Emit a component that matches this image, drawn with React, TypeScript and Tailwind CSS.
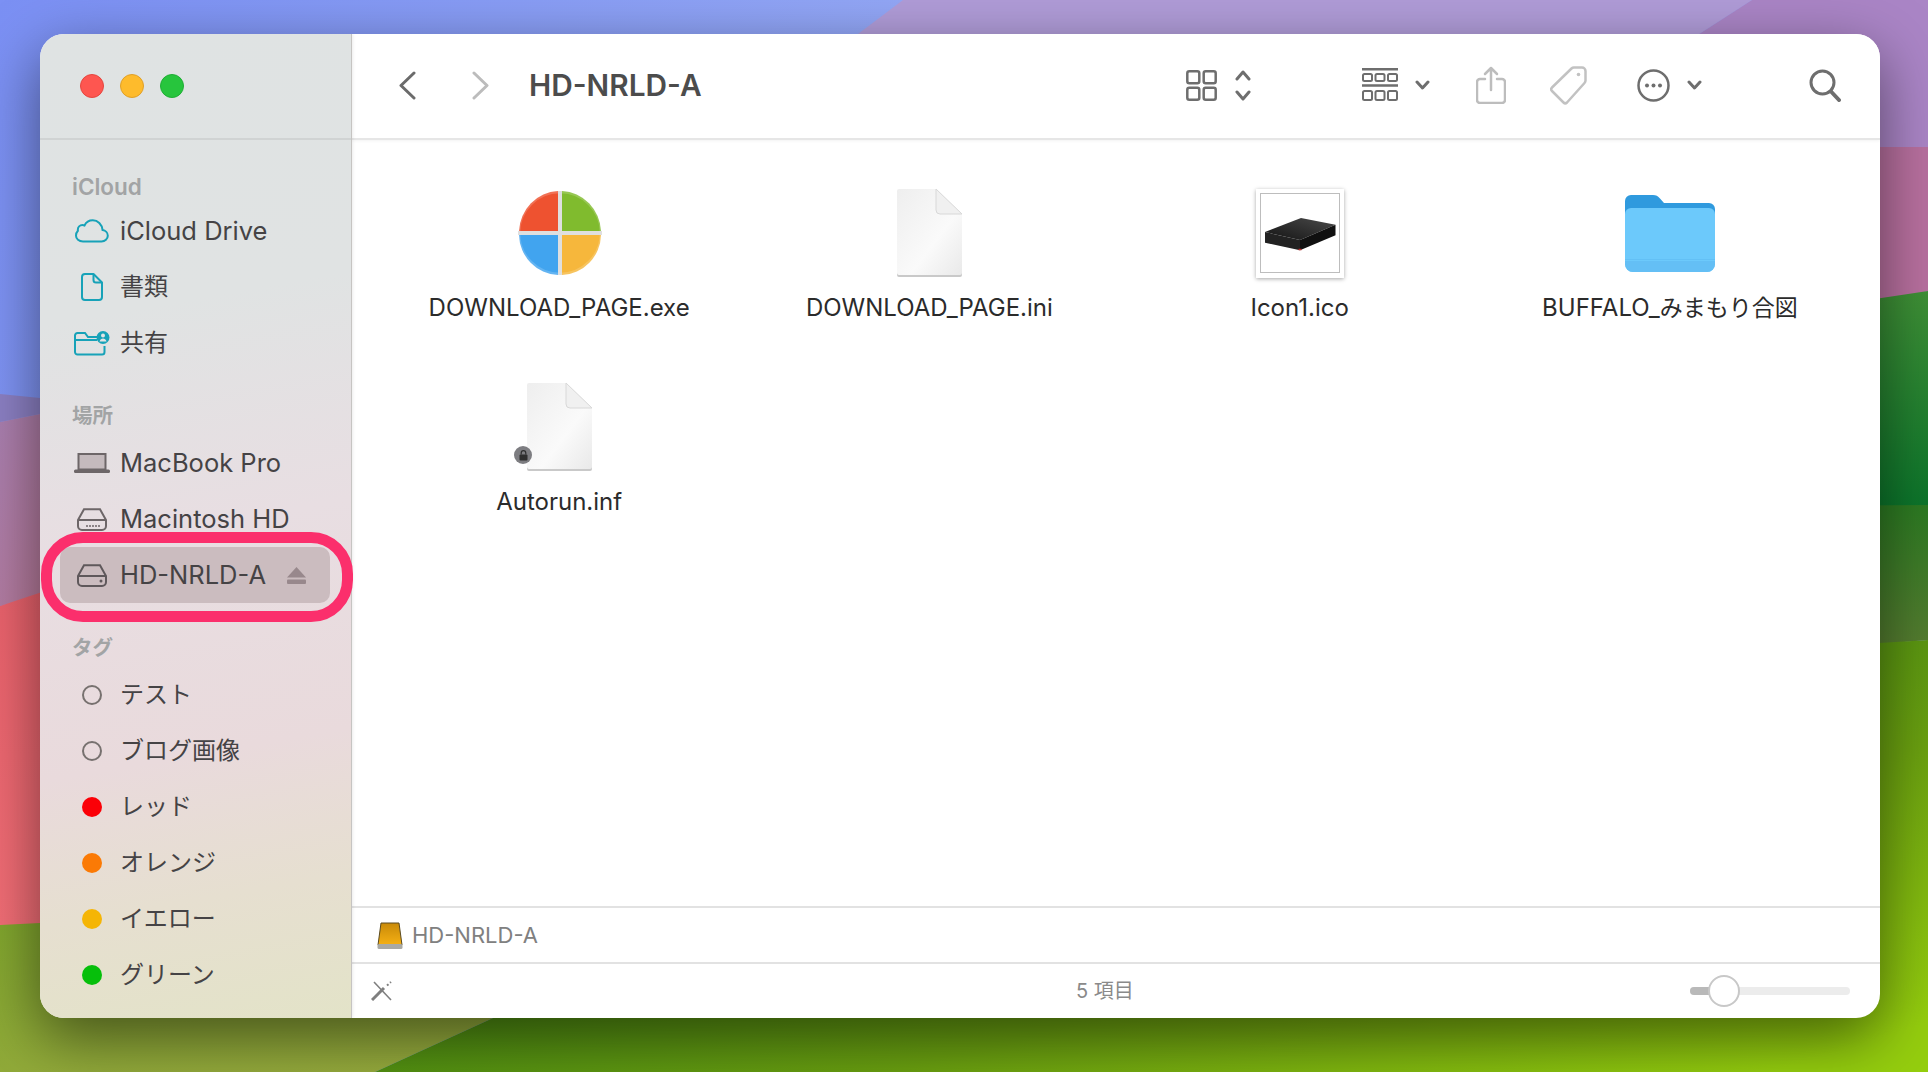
import type { ReactNode } from "react";

const CJK = "font-['Inter','Noto_Sans_CJK_JP',sans-serif]";

function Wallpaper() {
  return (
    <svg className="absolute inset-0 h-full w-full" viewBox="0 0 1928 1072" preserveAspectRatio="none">
      <defs>
        <linearGradient id="blue" x1="0" y1="0" x2="1" y2="0.2">
          <stop offset="0" stopColor="#7b90f4" />
          <stop offset="0.5" stopColor="#95a9f6" />
        </linearGradient>
        <linearGradient id="mauve" x1="0" y1="0" x2="1" y2="1">
          <stop offset="0" stopColor="#a97fb0" />
          <stop offset="1" stopColor="#bb7a96" />
        </linearGradient>
        <linearGradient id="coral" x1="0" y1="0" x2="0" y2="1">
          <stop offset="0" stopColor="#ea626c" />
          <stop offset="1" stopColor="#f26e76" />
        </linearGradient>
        <linearGradient id="greenTop" x1="0" y1="0" x2="0" y2="1">
          <stop offset="0" stopColor="#3f9036" />
          <stop offset="1" stopColor="#0c752b" />
        </linearGradient>
        <linearGradient id="greenMid" x1="0" y1="0" x2="0" y2="1">
          <stop offset="0" stopColor="#2c7a22" />
          <stop offset="1" stopColor="#5f7d33" />
        </linearGradient>
        <linearGradient id="lime" x1="0.1" y1="0.3" x2="0.9" y2="1">
          <stop offset="0" stopColor="#2f7a14" />
          <stop offset="0.6" stopColor="#6aa010" />
          <stop offset="1" stopColor="#95ce0e" />
        </linearGradient>
        <linearGradient id="olive" x1="0" y1="0" x2="0.6" y2="1">
          <stop offset="0" stopColor="#7ea52c" />
          <stop offset="1" stopColor="#98ac3e" />
        </linearGradient>
      </defs>
      <rect width="1928" height="1072" fill="url(#blue)" />
      <polygon points="903,0 1752,0 1519,150 1400,400 373,400" fill="#b09cd8" />
      <polygon points="1752,0 1928,0 1928,150 1519,150" fill="#aa85c6" />
      <polygon points="1680,147 1928,147 1928,291 1880,305 1680,340" fill="#b8709f" />
      <polygon points="1600,340 1928,291 1928,507 1600,507" fill="url(#greenTop)" />
      <polygon points="1600,507 1928,505 1928,640 1880,644 1600,680" fill="url(#greenMid)" />
      <polygon points="0,394 60,400 60,410 0,422" fill="#8c80c4" />
      <polygon points="0,422 60,410 60,590 0,606" fill="url(#mauve)" />
      <polygon points="0,606 60,586 60,925 0,925" fill="url(#coral)" />
      <polygon points="0,925 60,922 751,900 375,1072 0,1072" fill="url(#olive)" />
      <polygon points="751,900 1600,660 1928,640 1928,1072 375,1072" fill="url(#lime)" />
    </svg>
  );
}

function Cloud() {
  return (
    <svg width="34" height="24" viewBox="0 0 34 24" fill="none" stroke="#17a2b8" strokeWidth="2">
      <path d="M8 22.500h18.500c3.500 0 6.300-2.500 6.300-5.700 0-3.100-2.400-5.400-5.200-5.700C27 5.400 22.700 1.300 17.800 1.300c-3.700 0-6.800 2-8.300 5.200-.6-.3-1.300-.4-2-.4-2.700 0-4.700 2.100-4.700 4.800 0 .3 0 .6.100.9C1.900 12.800 1 14.900 1 16.800c0 3.200 2.900 5.700 7 5.700Z" />
    </svg>
  );
}

function DocOutline() {
  return (
    <svg width="22" height="28" viewBox="0 0 22 28" fill="none" stroke="#17a2b8" strokeWidth="2" strokeLinejoin="round">
      <path d="M4 1h8.500L21 9.500V24a3 3 0 0 1-3 3H4a3 3 0 0 1-3-3V4a3 3 0 0 1 3-3Z" />
      <path d="M12.500 1v6a2.500 2.500 0 0 0 2.500 2.500h6" />
    </svg>
  );
}

function SharedFolder() {
  return (
    <svg width="36" height="26" viewBox="0 0 36 26" fill="none" stroke="#17a2b8" strokeWidth="2">
      <path d="M24 7H14l-3-4H3.500A2.500 2.500 0 0 0 1 5.500V22a2.500 2.500 0 0 0 2.500 2.500H28a2.500 2.500 0 0 0 2.500-2.500v-6" />
      <path d="M1 10h22" />
      <circle cx="29" cy="7.500" r="6.500" fill="#17a2b8" stroke="none" />
      <circle cx="29" cy="5.500" r="2" fill="#e3e5e5" stroke="none" />
      <path d="M25.500 11.500c.5-2 2-3 3.500-3s3 1 3.500 3Z" fill="#e3e5e5" stroke="none" />
    </svg>
  );
}

function Laptop() {
  return (
    <svg width="36" height="20" viewBox="0 0 36 20" fill="none">
      <path d="M4.500 1h27v15.500h-27Z" fill="#c4babd" stroke="#6d6668" strokeWidth="2" />
      <rect x="0" y="16.500" width="36" height="3.500" rx="1.500" fill="#6d6668" />
    </svg>
  );
}

function InternalDisk() {
  return (
    <svg width="30" height="23" viewBox="0 0 30 23" fill="none" stroke="#6d6668" strokeWidth="2">
      <path d="M7 1.200h16L29 12v6a4 4 0 0 1-4 4H5a4 4 0 0 1-4-4v-6Z" />
      <path d="M1.500 12h27" />
      <path d="M10 17v2M13 17v2M16 17v2M19 17v2M22 17v2" strokeWidth="1.500" />
    </svg>
  );
}

function ExternalDisk() {
  return (
    <svg width="30" height="23" viewBox="0 0 30 23" fill="none" stroke="#5f585b" strokeWidth="2">
      <path d="M7 1.200h16L29 12v6a4 4 0 0 1-4 4H5a4 4 0 0 1-4-4v-6Z" />
      <path d="M1.500 12h27" />
      <circle cx="24" cy="17" r="1.500" fill="#5f585b" stroke="none" />
    </svg>
  );
}

function Eject() {
  return (
    <svg width="19" height="17" viewBox="0 0 19 17" fill="#98888c">
      <path d="M9.500 0 19 10.500H0Z" />
      <rect x="0" y="12.500" width="19" height="4.500" rx="1" />
    </svg>
  );
}

function Heading({ children, className }: { children: ReactNode; className: string }) {
  return (
    <div className={`flex h-[32px] items-center pl-[12px] font-semibold text-[#a2a4a5] ${CJK} ${className}`}>
      {children}
    </div>
  );
}

function SidebarRow({
  icon,
  label,
  selected,
  trailing,
}: {
  icon: ReactNode;
  label: string;
  selected?: boolean;
  trailing?: ReactNode;
}) {
  const isJapanese = /[^\x00-\x7F]/.test(label);
  return (
    <div
      className={`flex h-[56px] w-[270px] items-center rounded-[10px] pl-[12px] ${selected ? "bg-[#cbbcbf]" : ""}`}
    >
      <span className="flex w-[40px] shrink-0 items-center justify-center">{icon}</span>
      <span className={`ml-[8px] flex-1 text-[#454345] ${isJapanese ? "text-[24px]" : "text-[25.500px]"} ${CJK}`}>
        {label}
      </span>
      {trailing && <span className="mr-[24px] flex">{trailing}</span>}
    </div>
  );
}

function TagDot({ color }: { color?: string }) {
  if (!color) return <span className="h-[20px] w-[20px] rounded-full border-2 border-[#77716f]" />;
  return <span className="h-[20px] w-[20px] rounded-full" style={{ backgroundColor: color }} />;
}

const tags = [
  { label: "テスト" },
  { label: "ブログ画像" },
  { label: "レッド", color: "#fb0007" },
  { label: "オレンジ", color: "#fb7a05" },
  { label: "イエロー", color: "#f5b505" },
  { label: "グリーン", color: "#06bf0b" },
];

function Sidebar() {
  return (
    <aside className="relative flex w-[312px] shrink-0 flex-col border-r border-[#c6c4c2] bg-[linear-gradient(170deg,#dfe3e3_0%,#e0e3e3_28%,#e8dee2_50%,#e9dadc_72%,#e6dfd0_86%,#e3e3c8_100%)] shadow-[1px_0_3px_rgba(0,0,0,0.08)]">
      <div className="flex h-[106px] shrink-0 items-center gap-[16px] border-b-2 border-[#d0d3d3] pl-[40px]">
        <span className="h-[24px] w-[24px] rounded-full border border-[#e5463f] bg-[#fe5650]" />
        <span className="h-[24px] w-[24px] rounded-full border border-[#e0a028] bg-[#febb2c]" />
        <span className="h-[24px] w-[24px] rounded-full border border-[#1fae35] bg-[#27c53d]" />
      </div>
      <div className="pl-[20px] pt-[31px]">
        <Heading className="text-[22.500px]">iCloud</Heading>
        <SidebarRow icon={<Cloud />} label="iCloud Drive" />
        <SidebarRow icon={<DocOutline />} label="書類" />
        <SidebarRow icon={<SharedFolder />} label="共有" />
        <div className="h-[29px]" />
        <Heading className="mb-[3px] text-[20.500px]">場所</Heading>
        <SidebarRow icon={<Laptop />} label="MacBook Pro" />
        <SidebarRow icon={<InternalDisk />} label="Macintosh HD" />
        <SidebarRow icon={<ExternalDisk />} label="HD-NRLD-A" selected trailing={<Eject />} />
        <div className="h-[29px]" />
        <Heading className="mb-[3px] text-[20.500px]">タグ</Heading>
        {tags.map((t) => (
          <SidebarRow key={t.label} icon={<TagDot color={t.color} />} label={t.label} />
        ))}
      </div>
      {/* annotation ring drawn over the selected row */}
      <div className="pointer-events-none absolute left-[1px] top-[498px] h-[90px] w-[312px] rounded-[42px] border-[11px] border-[#fb2f6c]" />
    </aside>
  );
}

function Chevron({ dir, color }: { dir: "left" | "right"; color: string }) {
  return (
    <svg width="17" height="29" viewBox="0 0 17 29" fill="none" stroke={color} strokeWidth="3" strokeLinecap="round" strokeLinejoin="round">
      <path d={dir === "left" ? "M15 2 2 14.500 15 27" : "M2 2 15 14.500 2 27"} />
    </svg>
  );
}

function SmallChevron() {
  return (
    <svg width="15" height="10" viewBox="0 0 15 10" fill="none" stroke="#6e6e6e" strokeWidth="3" strokeLinecap="round" strokeLinejoin="round">
      <path d="M2 2l5.500 6L13 2" />
    </svg>
  );
}

function Toolbar() {
  return (
    <div className="flex h-[106px] shrink-0 items-center border-b-2 border-[#e6e6e6] bg-white pb-[2px] pr-[39px] pl-[47px] shadow-[0_1px_3px_rgba(0,0,0,0.05)]">
      <Chevron dir="left" color="#6b6b6b" />
      <span className="ml-[56px]">
        <Chevron dir="right" color="#bcbcbc" />
      </span>
      <span className={`ml-[40px] text-[29.800px] font-semibold text-[#4c4c4c] ${CJK}`}>HD-NRLD-A</span>
      <span className="ml-auto flex">
        <svg width="31" height="31" viewBox="0 0 31 31" fill="none" stroke="#6e6e6e" strokeWidth="2.500">
          <rect x="1.300" y="1.300" width="12" height="12" rx="2" />
          <rect x="17.700" y="1.300" width="12" height="12" rx="2" />
          <rect x="1.300" y="17.700" width="12" height="12" rx="2" />
          <rect x="17.700" y="17.700" width="12" height="12" rx="2" />
        </svg>
      </span>
      <span className="ml-[18px] flex">
        <svg width="16" height="31" viewBox="0 0 16 31" fill="none" stroke="#6e6e6e" strokeWidth="3" strokeLinecap="round" strokeLinejoin="round">
          <path d="M2 9l6-7 6 7M2 22l6 7 6-7" />
        </svg>
      </span>
      <span className="ml-[111px] flex">
        <svg width="36" height="34" viewBox="0 0 36 34" fill="none" stroke="#6e6e6e" strokeWidth="2">
          <path d="M0 1.200h36M0 17.500h36" strokeWidth="2.500" />
          <rect x="1" y="6" width="9" height="7" rx="1.500" />
          <rect x="13.500" y="6" width="9" height="7" rx="1.500" />
          <rect x="26" y="6" width="9" height="7" rx="1.500" />
          <rect x="1" y="23" width="9" height="9" rx="1.500" />
          <rect x="13.500" y="23" width="9" height="9" rx="1.500" />
          <rect x="26" y="23" width="9" height="9" rx="1.500" />
        </svg>
      </span>
      <span className="ml-[17px] flex">
        <SmallChevron />
      </span>
      <span className="ml-[46px] flex">
        <svg width="30" height="38" viewBox="0 0 30 38" fill="none" stroke="#bdbdbd" strokeWidth="2.500" strokeLinecap="round" strokeLinejoin="round">
          <path d="M9 13H4a3 3 0 0 0-3 3v18a3 3 0 0 0 3 3h22a3 3 0 0 0 3-3V16a3 3 0 0 0-3-3h-5" />
          <path d="M15 24V2M9 8l6-6 6 6" />
        </svg>
      </span>
      <span className="ml-[44px] flex">
        <svg width="37" height="39" viewBox="0 0 37 39" fill="none" stroke="#c2c2c2" strokeWidth="2.500" strokeLinejoin="round">
          <path d="M24 1.500h8a3.500 3.500 0 0 1 3.500 3.500v9.500a3.500 3.500 0 0 1-1 2.500L17 36.500a2.500 2.500 0 0 1-3.500 0L2 25a2.500 2.500 0 0 1 0-3.500L21.500 2.500a3.500 3.500 0 0 1 2.500-1Z" />
          <circle cx="28.500" cy="8.500" r="1.800" fill="#c2c2c2" stroke="none" />
        </svg>
      </span>
      <span className="ml-[50px] flex">
        <svg width="33" height="33" viewBox="0 0 33 33" fill="none" stroke="#6e6e6e" strokeWidth="2.500">
          <circle cx="16.500" cy="16.500" r="15" />
          <circle cx="10" cy="16.500" r="2" fill="#6e6e6e" stroke="none" />
          <circle cx="16.500" cy="16.500" r="2" fill="#6e6e6e" stroke="none" />
          <circle cx="23" cy="16.500" r="2" fill="#6e6e6e" stroke="none" />
        </svg>
      </span>
      <span className="ml-[17px] flex">
        <SmallChevron />
      </span>
      <span className="ml-[107px] flex">
        <svg width="32" height="33" viewBox="0 0 32 33" fill="none" stroke="#6e6e6e" strokeWidth="3" strokeLinecap="round">
          <circle cx="13.500" cy="13.500" r="11.500" />
          <path d="M22 22.500 30 31" strokeWidth="4" />
        </svg>
      </span>
    </div>
  );
}

function GenericDoc() {
  return (
    <svg width="68" height="90" viewBox="0 0 68 90" fill="none">
      <defs>
        <linearGradient id="sheet" x1="0" y1="0" x2="1" y2="1">
          <stop offset="0" stopColor="#eeeeee" />
          <stop offset="0.6" stopColor="#fafafa" />
          <stop offset="1" stopColor="#e9e9e9" />
        </linearGradient>
      </defs>
      <path d="M4 2.500h37L67 28v58a2 2 0 0 1-2 2H4a2 2 0 0 1-2-2V4.500a2 2 0 0 1 2-2Z" fill="#c9c9c9" transform="translate(0 1)" />
      <path d="M4 1h37l26 26v58a2 2 0 0 1-2 2H4a2 2 0 0 1-2-2V3a2 2 0 0 1 2-2Z" fill="url(#sheet)" />
      <path d="M41 1v21a4 4 0 0 0 4 4h22Z" fill="#f0f0f0" stroke="#d8d8d8" />
    </svg>
  );
}

function WindowsExe() {
  return (
    <svg width="86" height="86" viewBox="0 0 84 86" className="ml-[1px]">
      <path d="M40 1a41 42 0 0 0-39 40h39Z" fill="#ee5230" />
      <path d="M44 1a41 42 0 0 1 39 40H44Z" fill="#80bb2e" />
      <path d="M40 45H1a41 41 0 0 0 39 40Z" fill="#41a4ef" />
      <path d="M44 45h39a41 41 0 0 1-39 40Z" fill="#f6b73c" />
      <circle cx="42" cy="43" r="41" fill="none" stroke="#ffffff" strokeOpacity="0.18" strokeWidth="2.500" />
      <path d="M42 1v84M0 43h84" stroke="#dfdfdf" strokeWidth="4" />
    </svg>
  );
}

function DriveThumb() {
  return (
    <span className="flex bg-white shadow-[0_1px_4px_rgba(0,0,0,0.35)]">
      <svg width="88" height="89" viewBox="0 0 88 89" fill="none">
        <defs>
          <linearGradient id="driveTop" x1="0" y1="1" x2="1" y2="0">
            <stop offset="0" stopColor="#141414" />
            <stop offset="1" stopColor="#4a4a4a" />
          </linearGradient>
        </defs>
        <rect x="4.500" y="4.500" width="79" height="79" stroke="#bdbdbd" />
        <path d="M9 43 45 29l34.500 6.700L44 51Z" fill="url(#driveTop)" />
        <path d="M9 43 44 51v10.300L9 53.700Z" fill="#222222" />
        <path d="M44 51l35.500-15.300v10.600L44 61.300Z" fill="#101010" />
        <path d="M42.500 60.500h3" stroke="#c03030" strokeWidth="1.500" />
      </svg>
    </span>
  );
}

function Folder() {
  return (
    <svg width="90" height="77" viewBox="0 0 90 77">
      <path d="M6 0h22c3 0 5 1 7 3.500L39 8h45a6 6 0 0 1 6 6v56H0V6a6 6 0 0 1 6-6Z" fill="#2f9ade" />
      <path d="M6 13h78a6 6 0 0 1 6 6v50a8 8 0 0 1-8 8H8a8 8 0 0 1-8-8V19a6 6 0 0 1 6-6Z" fill="#6cc9fb" />
      <path d="M0 64.500h90" stroke="#63c0f5" strokeWidth="1" />
      <path d="M0 69a8 8 0 0 0 8 8h74a8 8 0 0 0 8-8v-3H0Z" fill="#64bff5" />
    </svg>
  );
}

function FileCell({ icon, label }: { icon: ReactNode; label: ReactNode }) {
  return (
    <div className="flex h-[194px] flex-col items-center">
      <div className="relative flex h-[96px] items-center justify-center">{icon}</div>
      <div className={`mt-[11px] h-[32px] text-[24px] leading-[32px] whitespace-nowrap text-[#2b2b2b] ${CJK}`}>{label}</div>
    </div>
  );
}

function App() {
  return (
    <div className="relative h-[1072px] w-[1928px] overflow-hidden">
      <Wallpaper />
      <div className="relative ml-[40px] mt-[34px] flex h-[984px] w-[1840px] overflow-hidden rounded-[24px] bg-white shadow-[0_20px_60px_rgba(0,0,0,0.5)]">
        <Sidebar />
        <main className="flex min-w-0 flex-1 flex-col">
          <Toolbar />
          <div className="grid flex-1 grid-cols-4 content-start pl-[22px] pr-[25px] pt-[45px]">
            <FileCell icon={<WindowsExe />} label="DOWNLOAD_PAGE.exe" />
            <FileCell icon={<GenericDoc />} label="DOWNLOAD_PAGE.ini" />
            <FileCell icon={<DriveThumb />} label="Icon1.ico" />
            <FileCell
              icon={<Folder />}
              label={
                <>
                  BUFFALO_<span className="text-[23px]">みまもり合図</span>
                </>
              }
            />
            <FileCell
              icon={
                <>
                  <GenericDoc />
                  <span className="absolute bottom-[11px] left-[-11px] flex h-[18px] w-[18px] items-center justify-center rounded-full bg-[#7d7d81]">
                    <svg width="9" height="11" viewBox="0 0 9 11" fill="none">
                      <rect x="0.500" y="4.500" width="8" height="6" rx="1" fill="#2f2f2f" />
                      <path d="M2.200 4.500V3a2.300 2.300 0 0 1 4.600 0v1.500" stroke="#2f2f2f" strokeWidth="1.200" />
                    </svg>
                  </span>
                </>
              }
              label="Autorun.inf"
            />
          </div>
          <div className="flex h-[56px] shrink-0 items-center border-t-2 border-[#e2e2e2] pl-[25px]">
            <svg width="26" height="27" viewBox="0 0 26 27">
              <defs>
                <linearGradient id="drivePath" x1="0" y1="0" x2="0" y2="1">
                  <stop offset="0" stopColor="#c98a08" />
                  <stop offset="1" stopColor="#f5b014" />
                </linearGradient>
              </defs>
              <path d="M4 1h18l3 22H1Z" fill="url(#drivePath)" stroke="#5a4a20" strokeWidth="1" />
              <rect x="0.500" y="22" width="25" height="5" rx="1.500" fill="#a9a9a4" />
            </svg>
            <span className={`ml-[9px] text-[22px] text-[#808080] ${CJK}`}>HD-NRLD-A</span>
          </div>
          <div className="flex h-[56px] shrink-0 items-center border-t-2 border-[#e2e2e2] pl-[19px] pr-[30px]">
            <svg width="22" height="20" viewBox="0 0 22 20" fill="none" stroke="#7f7f7f" strokeWidth="2">
              <path d="M3 1l17 18" strokeWidth="1.600" />
              <path d="M1 19 13 7" strokeWidth="3" />
              <path d="M16 4.500 20 1" strokeWidth="2" strokeDasharray="2 2" />
            </svg>
            <span className={`ml-[683px] text-[20px] text-[#8a8a8a] ${CJK}`}>5 項目</span>
            <div className="relative ml-auto h-[8px] w-[160px] rounded-full bg-[#ececec]">
              <div className="h-full w-[30px] rounded-l-full bg-[#b9b9b9]" />
              <div className="absolute left-[18px] top-[-12px] h-[32px] w-[32px] rounded-full border-2 border-[#c8c8c8] bg-white" />
            </div>
          </div>
        </main>
      </div>
    </div>
  );
}

export default App;
